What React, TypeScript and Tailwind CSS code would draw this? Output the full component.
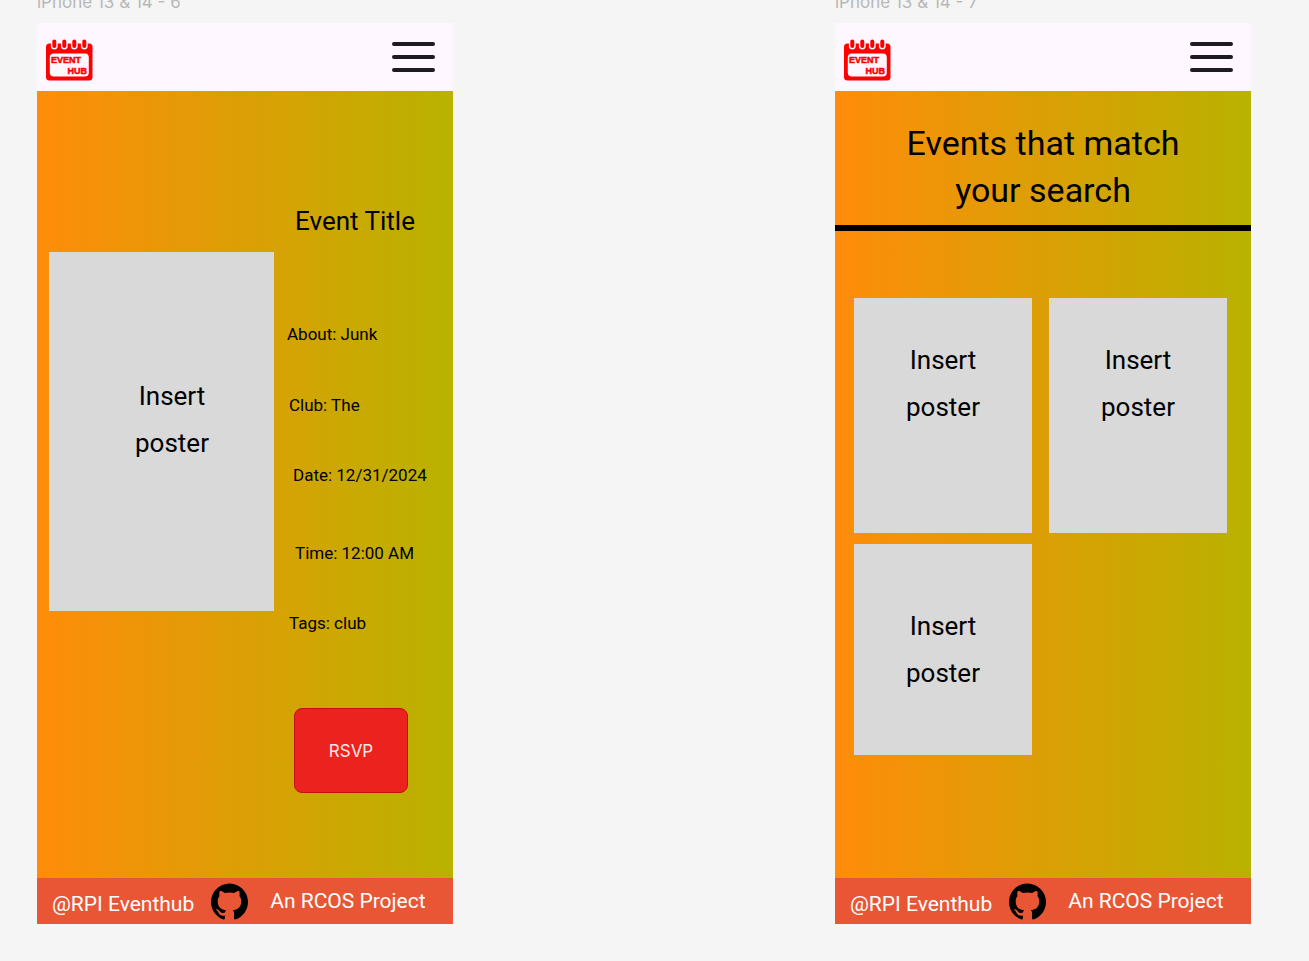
import type { ReactNode } from 'react';

function Logo() {
  return (
    <svg width="48" height="42" viewBox="0 0 48 42" role="img" aria-label="Event Hub">
      <rect x="1" y="4.5" width="46.5" height="37" rx="3.5" fill="#ff0000" />
      {[9.3, 19.3, 29.3, 39.3].map((x) => (
        <g key={x}>
          <path d={`M${x - 3.4} 4V7a3.4 3.4 0 0 0 6.8 0V4z`} fill="#fef7ff" />
          <rect x={x - 2} y="0.5" width="4" height="8.5" rx="2" fill="#ff0000" />
        </g>
      ))}
      <rect x="4.8" y="14.5" width="39" height="23" rx="4" fill="#fef7ff" />
      <g
        fill="#ff0000"
        stroke="#ff0000"
        strokeWidth="0.5"
        fontFamily="'Liberation Sans Narrow', 'Liberation Sans', sans-serif"
        fontWeight="700"
        fontSize="9"
      >
        <text x="6" y="23.5">EVENT</text>
        <text x="22.5" y="35">HUB</text>
      </g>
    </svg>
  );
}

function GithubMark() {
  return (
    <svg width="37" height="37" viewBox="0 0 24 24" fill="#000000" aria-hidden="true">
      <path d="M12 .297c-6.63 0-12 5.373-12 12 0 5.303 3.438 9.8 8.205 11.385.6.113.82-.258.82-.577 0-.285-.01-1.04-.015-2.04-3.338.724-4.042-1.61-4.042-1.61C4.422 18.07 3.633 17.7 3.633 17.7c-1.087-.744.084-.729.084-.729 1.205.084 1.838 1.236 1.838 1.236 1.07 1.835 2.809 1.305 3.495.998.108-.776.417-1.305.76-1.605-2.665-.3-5.466-1.332-5.466-5.93 0-1.31.465-2.38 1.235-3.22-.135-.303-.54-1.523.105-3.176 0 0 1.005-.322 3.3 1.23.96-.267 1.98-.399 3-.405 1.02.006 2.04.138 3 .405 2.28-1.552 3.285-1.23 3.285-1.23.645 1.653.24 2.873.12 3.176.765.84 1.23 1.91 1.23 3.22 0 4.61-2.805 5.625-5.475 5.92.42.36.81 1.096.81 2.22 0 1.606-.015 2.896-.015 3.286 0 .315.21.69.825.57C20.565 22.092 24 17.592 24 12.297c0-6.627-5.373-12-12-12" />
    </svg>
  );
}

function Phone({ label, children }: { label: string; children: ReactNode }) {
  return (
    <section className="w-[416px] shrink-0">
      <h2 className="-mt-2 mb-[11px] font-['Inter',sans-serif] text-[17px] leading-5 text-[#b8b8b8]">{label}</h2>
      <header className="flex h-[68px] items-center justify-between bg-[#fef7ff] pl-2 pr-[18px]">
        <a href="#home" aria-label="Event Hub home" className="mt-1.5">
          <Logo />
        </a>
        <button type="button" aria-label="Open menu" className="flex w-[43px] flex-col gap-[9px]">
          <span className="h-1 rounded-full bg-[#1d1b20]" />
          <span className="h-1 rounded-full bg-[#1d1b20]" />
          <span className="h-1 rounded-full bg-[#1d1b20]" />
        </button>
      </header>
      <main className="min-h-[787px] bg-linear-to-r/srgb from-[#ff8c0a] to-[#b8b200]">{children}</main>
      <footer className="flex h-[46px] items-center bg-[#e95635] pl-[15px] text-[21px] leading-6 text-white">
        <span className="mt-1.5">@RPI Eventhub</span>
        <a href="#github" aria-label="GitHub" className="ml-[17px]">
          <GithubMark />
        </a>
        <span className="ml-[22px]">An RCOS Project</span>
      </footer>
    </section>
  );
}

function Poster({ className }: { className: string }) {
  return (
    <div className={`bg-[#d9d9d9] text-center text-[26px] leading-[47px] ${className}`}>
      Insert
      <br />
      poster
    </div>
  );
}

export default function App() {
  return (
    <div className="flex min-h-screen justify-between gap-8 overflow-hidden bg-[#f5f5f5] pl-[37px] pr-[58px] font-['Roboto',sans-serif] text-black">
      <Phone label="iPhone 13 & 14 - 6">
        <div className="flex pl-3">
          <Poster className="mt-[161px] h-[359px] w-[225px] shrink-0 pl-[21px] pt-[121px]" />
          <div className="ml-[13px] flex flex-col items-start pt-[114px] text-[17px] leading-6">
            <h1 className="mb-[85px] pl-2 text-[26px] leading-8">Event Title</h1>
            <p className="mb-[47px]">About: Junk</p>
            <p className="mb-[46px] pl-0.5">Club: The</p>
            <p className="mb-[54px] pl-1.5">Date: 12/31/2024</p>
            <p className="mb-[46px] pl-2">Time: 12:00 AM</p>
            <p className="mb-[73px] pl-0.5">Tags: club</p>
            <button
              type="button"
              className="ml-[7px] h-[85px] w-[114px] rounded-lg border border-[#c00f0c] bg-[#ec221f] font-['Inter',sans-serif] text-[17px] text-[#fee9e7]"
            >
              RSVP
            </button>
          </div>
        </div>
      </Phone>
      <Phone label="iPhone 13 & 14 - 7">
        <h1 className="border-b-6 border-black px-12 pb-[11px] pt-[29px] text-center text-[34px] leading-[47px]">
          Events that match your search
        </h1>
        <div className="grid grid-cols-2 gap-x-[17px] gap-y-[11px] pl-[19px] pr-6 pt-[67px]">
          <Poster className="h-[235px] pt-[39px]" />
          <Poster className="h-[235px] pt-[39px]" />
          <Poster className="h-[211px] pt-[59px]" />
        </div>
      </Phone>
    </div>
  );
}
